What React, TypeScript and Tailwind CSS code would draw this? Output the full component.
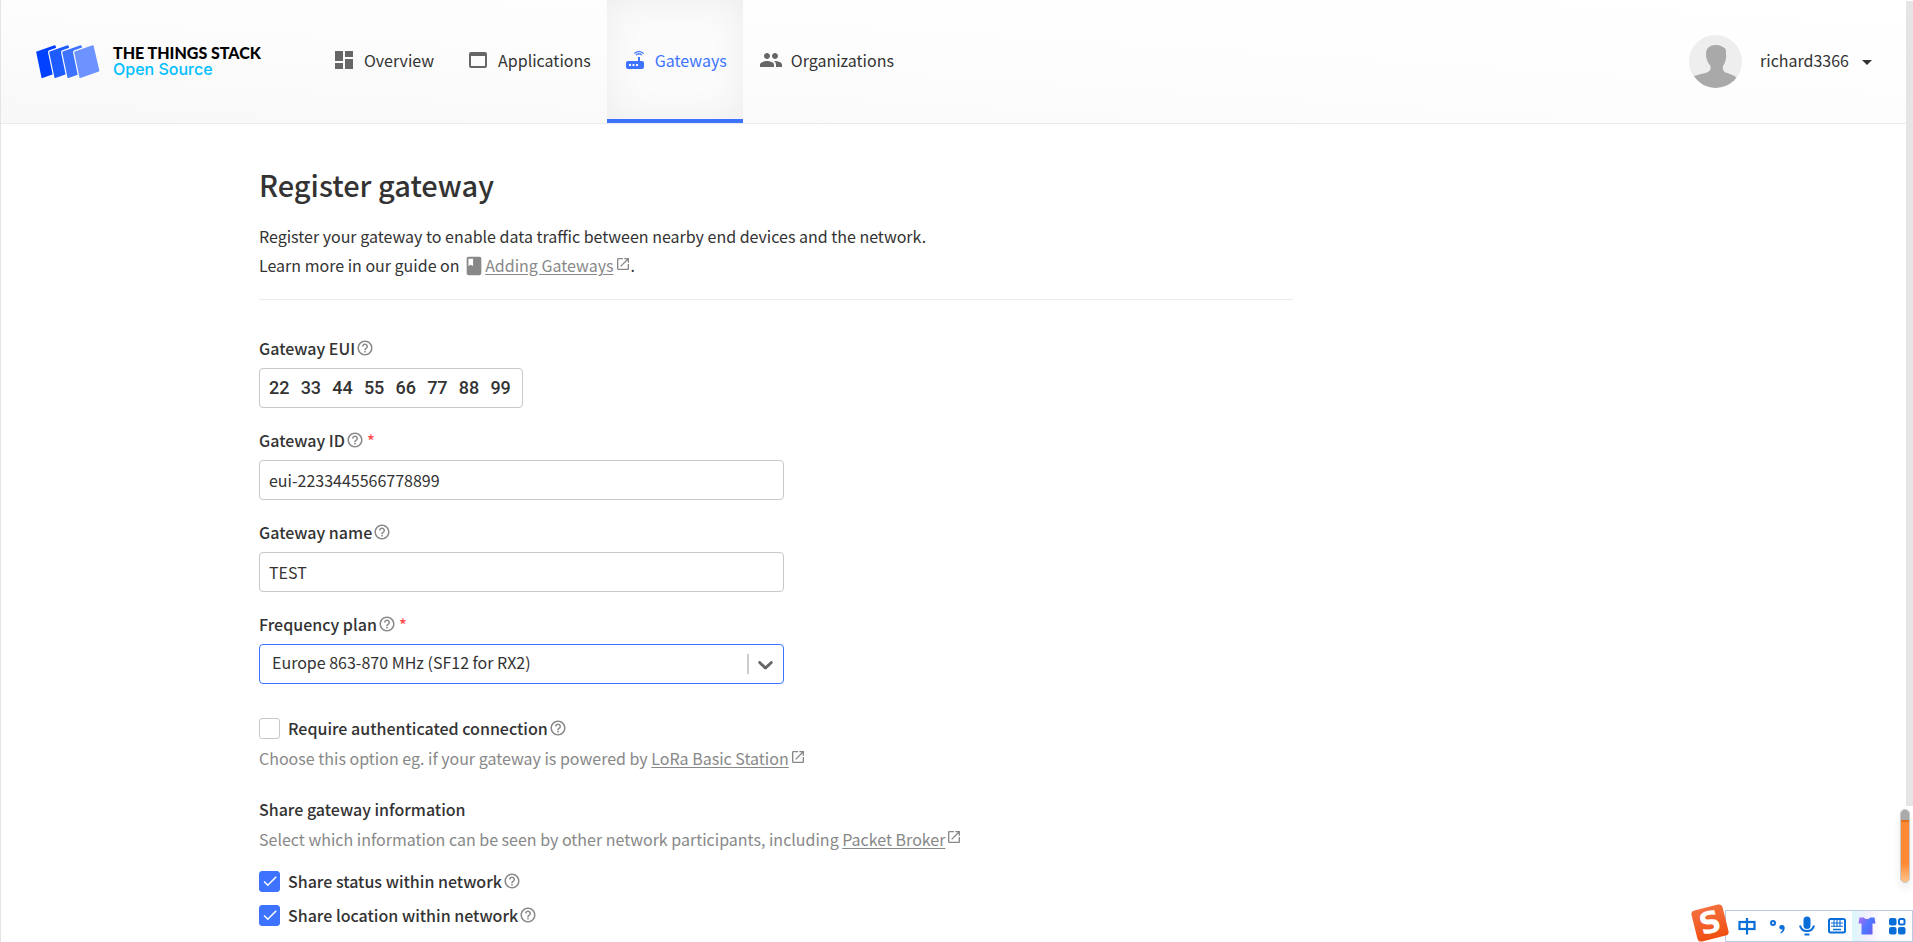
import { useState, type ReactNode } from 'react'
import {
  MdArrowDropDown,
  MdBook,
  MdCheck,
  MdDashboard,
  MdHelpOutline,
  MdLaunch,
  MdPeople,
  MdRouter,
  MdWebAsset,
} from 'react-icons/md'

const EUI_BYTES = ['22', '33', '44', '55', '66', '77', '88', '99']

function Logo() {
  const sheets = [
    { x: 0, fill: '#0042ff' },
    { x: 13, fill: '#1f5cff' },
    { x: 26, fill: '#3d73ff' },
    { x: 38, fill: '#6c93ff' },
  ]
  return (
    <svg viewBox="0 0 64 34" className="h-[34px] w-16 overflow-visible" aria-hidden="true">
      {sheets.map((s) => (
        <g key={s.x} transform={`translate(${s.x} 0)`} strokeLinejoin="round">
          <path d="M1 7.2 18.8 1 24.6 25.8 6.2 32.2Z" fill="#fcfcfc" stroke="#fcfcfc" strokeWidth={s.x ? 4 : 0} />
          <path d="M1 7.2 18.8 1 24.6 25.8 6.2 32.2Z" fill={s.fill} stroke={s.fill} strokeWidth="1.6" />
        </g>
      ))}
    </svg>
  )
}

function Avatar() {
  return (
    <svg viewBox="0 0 53 53" className="size-[53px] rounded-full bg-[#eee]" aria-hidden="true">
      <path
        d="M27 10c3-.4 5.500.8 7 2.200 2.600.4 3.300 3 3 6.300.7 5-.6 9-3 12.500-.6 3 .5 5.500 2.500 6.500 4.500 1.600 8.500 2.500 11.500 5.500C43 49 35.500 53 26.500 53S9.500 48 5 41c4.500-1.800 10-2 14-4 2.500-1.300 3-3.500 2.500-6C18.500 27.500 17 24 17 19c0-6 4-9 10-9Z"
        fill="#a9a9a9"
      />
    </svg>
  )
}

function NavItem({ icon, children, active }: { icon: ReactNode; children: ReactNode; active?: boolean }) {
  return (
    <a
      href="#nav"
      aria-current={active ? 'page' : undefined}
      className={
        'flex items-center gap-2 border-b-4 px-4 ' +
        (active
          ? 'border-[#3d73ff] bg-[#fbfbfb] text-[#3d73ff] shadow-[inset_0_0_36px_rgba(0,0,0,0.06)]'
          : 'border-transparent')
      }
    >
      <span className={active ? 'text-2xl' : 'text-2xl text-[#666]'}>{icon}</span>
      <span>{children}</span>
    </a>
  )
}

function ExtLink({ children }: { children: ReactNode }) {
  return (
    <a href="#docs" className="text-[#888]">
      <span className="underline underline-offset-2">{children}</span>
      <MdLaunch className="mb-2 ml-px inline size-4" aria-hidden="true" />
    </a>
  )
}

function Help() {
  return <MdHelpOutline className="size-[18px] shrink-0 text-[#888]" aria-hidden="true" />
}

function Field({
  id,
  label,
  required,
  children,
}: {
  id: string
  label: string
  required?: boolean
  children: ReactNode
}) {
  return (
    <div className="flex flex-col gap-2">
      <label htmlFor={id} className="flex h-6 items-center gap-px font-medium">
        {label}
        <Help />
        {required && <span className="pl-0.5 text-[#ff4d4f]">*</span>}
      </label>
      {children}
    </div>
  )
}

function Check({ id, children, on }: { id: string; children: ReactNode; on?: boolean }) {
  const [checked, setChecked] = useState(!!on)
  return (
    <label htmlFor={id} className="flex h-6 items-center gap-2 font-medium">
      <span className="grid size-[21px] place-items-center">
        <input
          id={id}
          type="checkbox"
          checked={checked}
          onChange={(e) => setChecked(e.target.checked)}
          className="col-start-1 row-start-1 size-[21px] appearance-none rounded-[3px] border border-[#c8c8c8] bg-white checked:border-[#3d73ff] checked:bg-[#3d73ff]"
        />
        {checked && <MdCheck className="pointer-events-none col-start-1 row-start-1 size-[18px] text-white" />}
      </span>
      <span className="flex items-center gap-px">
        {children}
        <Help />
      </span>
    </label>
  )
}

function ImeBar() {
  return (
    <div className="absolute right-0 bottom-0 flex h-8 items-center border border-[#b9cbe6] bg-white pl-1.5 text-[#0a6ed8]">
      <div className="absolute -top-1 -left-8 flex size-8 -rotate-[14deg] items-center justify-center rounded-[4px] bg-linear-to-b from-[#f4703c] to-[#f04e10] font-['DejaVu_Sans'] text-[30px] leading-6 font-bold text-white">
        <span className="h-6">S</span>
      </div>
      <span className="grid w-[30px] place-items-center">
        <svg viewBox="0 0 18 18" className="size-[18px]" fill="none" stroke="currentColor" strokeWidth="2.200">
          <rect x="1.500" y="5" width="15" height="7" />
          <path d="M9 1v16.500" />
        </svg>
      </span>
      <span className="grid w-[30px] place-items-center">
        <svg viewBox="0 0 18 18" className="size-[18px]" fill="none" stroke="currentColor" strokeWidth="2">
          <circle cx="5" cy="6" r="2" />
          <path
            d="M14 8a2.300 2.300 0 1 0 .6 4.300c-.2 1.500-1 2.400-2.300 3.100l.5 1c2.500-1 3.900-3 3.900-5.500 0-1.800-1-2.900-2.700-2.900Z"
            fill="currentColor"
            stroke="none"
          />
        </svg>
      </span>
      <span className="grid w-[30px] place-items-center">
        <svg viewBox="0 0 18 20" className="h-5 w-[18px]" fill="none" stroke="currentColor" strokeWidth="2">
          <rect x="5.500" y="0.500" width="7" height="12.500" rx="3.500" fill="currentColor" stroke="none" />
          <path d="M2 9.500c.8 3.600 3.300 5.500 7 5.500s6.200-1.900 7-5.500M6.500 18.500h5" />
        </svg>
      </span>
      <span className="grid w-[30px] place-items-center">
        <svg viewBox="0 0 18 16" className="h-4 w-[18px]" fill="none" stroke="currentColor" strokeWidth="2">
          <rect x="1" y="1" width="16" height="13.500" rx="1.500" />
          <path d="M3 5h12M3 8.200h12M6 2v7M9 2v7M12 2v7" strokeWidth="1.100" />
          <path d="M5 11.500h8" strokeWidth="1.500" />
        </svg>
      </span>
      <span className="grid h-full w-[30px] place-items-center bg-linear-to-r from-[#d9f7fa] via-[#f3efff] to-white">
        <svg viewBox="0 0 18 18" className="size-[18px]">
          <defs>
            <linearGradient id="shirt" x1="0" y1="0" x2="1" y2="0.600">
              <stop offset="0" stopColor="#b06cf5" />
              <stop offset="0.600" stopColor="#4a78ff" />
              <stop offset="1" stopColor="#6a5cf0" />
            </linearGradient>
          </defs>
          <path d="M1.500.5h4.500c1 2 5 2 6 0h4.500l1 6h-3v11h-11v-11h-3Z" fill="url(#shirt)" />
        </svg>
      </span>
      <span className="grid w-[30px] place-items-center">
        <svg viewBox="0 0 18 18" className="size-[18px]" fill="currentColor">
          <rect x="1" y="1" width="7.500" height="7.500" rx="2" />
          <rect x="1" y="10" width="7.500" height="7.500" rx="2" />
          <rect x="10" y="10" width="7.500" height="7.500" rx="2" />
          <rect x="11" y="2" width="5.500" height="5.500" rx="1.500" fill="none" stroke="currentColor" strokeWidth="2" />
        </svg>
      </span>
    </div>
  )
}

export default function App() {
  const inputClass =
    'h-10 w-full rounded border border-[#c8c8c8] bg-white px-[9px] outline-none focus:border-[#3d73ff]'
  return (
    <div className="relative flex h-screen overflow-hidden bg-white font-['Noto_Sans_CJK_SC',sans-serif] text-base leading-6 text-[#333]">
      <div className="flex min-w-0 flex-1 flex-col border-l border-[#e5e5e5]">
        <header className="flex h-[124px] shrink-0 border-b border-[#ebebeb] bg-linear-to-bl from-white via-[#fdfdfd] to-[#f8f8f8] pr-[27px] pl-[35px]">
          <a href="#home" className="mr-[55px] flex items-center gap-[13px]">
            <Logo />
            <span className="flex flex-col pb-0.5">
              <span className="font-[Lato] text-base leading-4 font-black text-black">THE THINGS STACK</span>
              <span className="font-[Inter] text-base leading-4 font-medium text-[#00bfff]">Open Source</span>
            </span>
          </a>
          <nav className="flex flex-1">
            <NavItem icon={<MdDashboard />}>Overview</NavItem>
            <NavItem icon={<MdWebAsset />}>Applications</NavItem>
            <NavItem icon={<MdRouter />} active>
              Gateways
            </NavItem>
            <NavItem icon={<MdPeople />}>Organizations</NavItem>
          </nav>
          <button type="button" className="flex items-center">
            <Avatar />
            <span className="mr-1.5 ml-[18px] pb-[3px]">richard3366</span>
            <MdArrowDropDown className="size-6" aria-hidden="true" />
          </button>
        </header>

        <main className="ml-[258px] max-w-[1034px]">
          <h1 className="pt-10 text-[29px] leading-10 font-medium">Register gateway</h1>
          <p className="mt-[18px] border-b border-[#ebebeb] pb-[19px] leading-[29px]">
            Register your gateway to enable data traffic between nearby end devices and the network.
            <br />
            Learn more in our guide on{' '}
            <MdBook className="-mt-1 inline size-[22px] text-[#888]" aria-hidden="true" />
            <ExtLink>Adding Gateways</ExtLink>.
          </p>

          <form className="flex flex-col pt-9">
            <div className="flex max-w-[525px] flex-col gap-5">
              <Field id="eui-0" label="Gateway EUI">
                <div className="grid h-10 w-[264px] grid-cols-8 rounded border border-[#c8c8c8] pl-[9px] font-[Roboto] text-lg font-medium">
                  {EUI_BYTES.map((byte, i) => (
                    <input
                      key={byte}
                      id={`eui-${i}`}
                      aria-label={`Gateway EUI byte ${i + 1}`}
                      defaultValue={byte}
                      maxLength={2}
                      className="w-full min-w-0 bg-transparent outline-none"
                    />
                  ))}
                </div>
              </Field>
              <Field id="gateway-id" label="Gateway ID" required>
                <input id="gateway-id" defaultValue="eui-2233445566778899" className={inputClass} />
              </Field>
              <Field id="gateway-name" label="Gateway name">
                <input id="gateway-name" defaultValue="TEST" className={inputClass} />
              </Field>
              <Field id="frequency-plan" label="Frequency plan" required>
                <div className="relative">
                  <select
                    id="frequency-plan"
                    className="h-10 w-full appearance-none rounded border border-[#3d73ff] bg-white pb-1 pl-3 outline-none"
                  >
                    <option>Europe 863-870 MHz (SF12 for RX2)</option>
                  </select>
                  <span className="pointer-events-none absolute inset-y-0 right-1.5 flex items-center gap-1">
                    <span className="h-5 w-0.5 bg-[#ccc]" />
                    <svg viewBox="0 0 20 20" className="size-[25px]" fill="#666" aria-hidden="true">
                      <path d="M4.516 7.548c0.436-0.446 1.043-0.481 1.576 0l3.908 3.747 3.908-3.747c0.533-0.481 1.141-0.446 1.574 0 0.436 0.445 0.408 1.197 0 1.615-0.406 0.418-4.695 4.502-4.695 4.502-0.217 0.223-0.502 0.335-0.787 0.335s-0.570-0.112-0.789-0.335c0 0-4.287-4.084-4.695-4.502s-0.436-1.170 0-1.615z" />
                    </svg>
                  </span>
                </div>
              </Field>
            </div>

            <div className="mt-8">
              <Check id="require-auth">Require authenticated connection</Check>
              <p className="mt-1.5 text-[#888]">
                Choose this option eg. if your gateway is powered by <ExtLink>LoRa Basic Station</ExtLink>
              </p>
            </div>

            <fieldset className="mt-6">
              <legend className="font-medium">Share gateway information</legend>
              <p className="mt-1.5 text-[#888]">
                Select which information can be seen by other network participants, including{' '}
                <ExtLink>Packet Broker</ExtLink>
              </p>
              <div className="mt-4 flex flex-col gap-2.5">
                <Check id="share-status" on>
                  Share status within network
                </Check>
                <Check id="share-location" on>
                  Share location within network
                </Check>
              </div>
            </fieldset>
          </form>
        </main>
      </div>

      <div className="w-[7px] shrink-0 pt-px pb-[136px]">
        <div className="h-full bg-[#e5e5e5]" />
      </div>

      <div className="absolute right-[3px] bottom-[59px] flex h-[74px] w-[10px] flex-col overflow-hidden rounded-full border border-[#c9c9c9] bg-[#aaa] pt-2.5 shadow-[0_6px_8px_rgba(0,0,0,0.08)]">
        <div className="flex-1 border-t-2 border-[#e0701a] bg-linear-to-b from-[#ff8a35] from-70% to-[#ffc489]" />
      </div>
      <ImeBar />
    </div>
  )
}
